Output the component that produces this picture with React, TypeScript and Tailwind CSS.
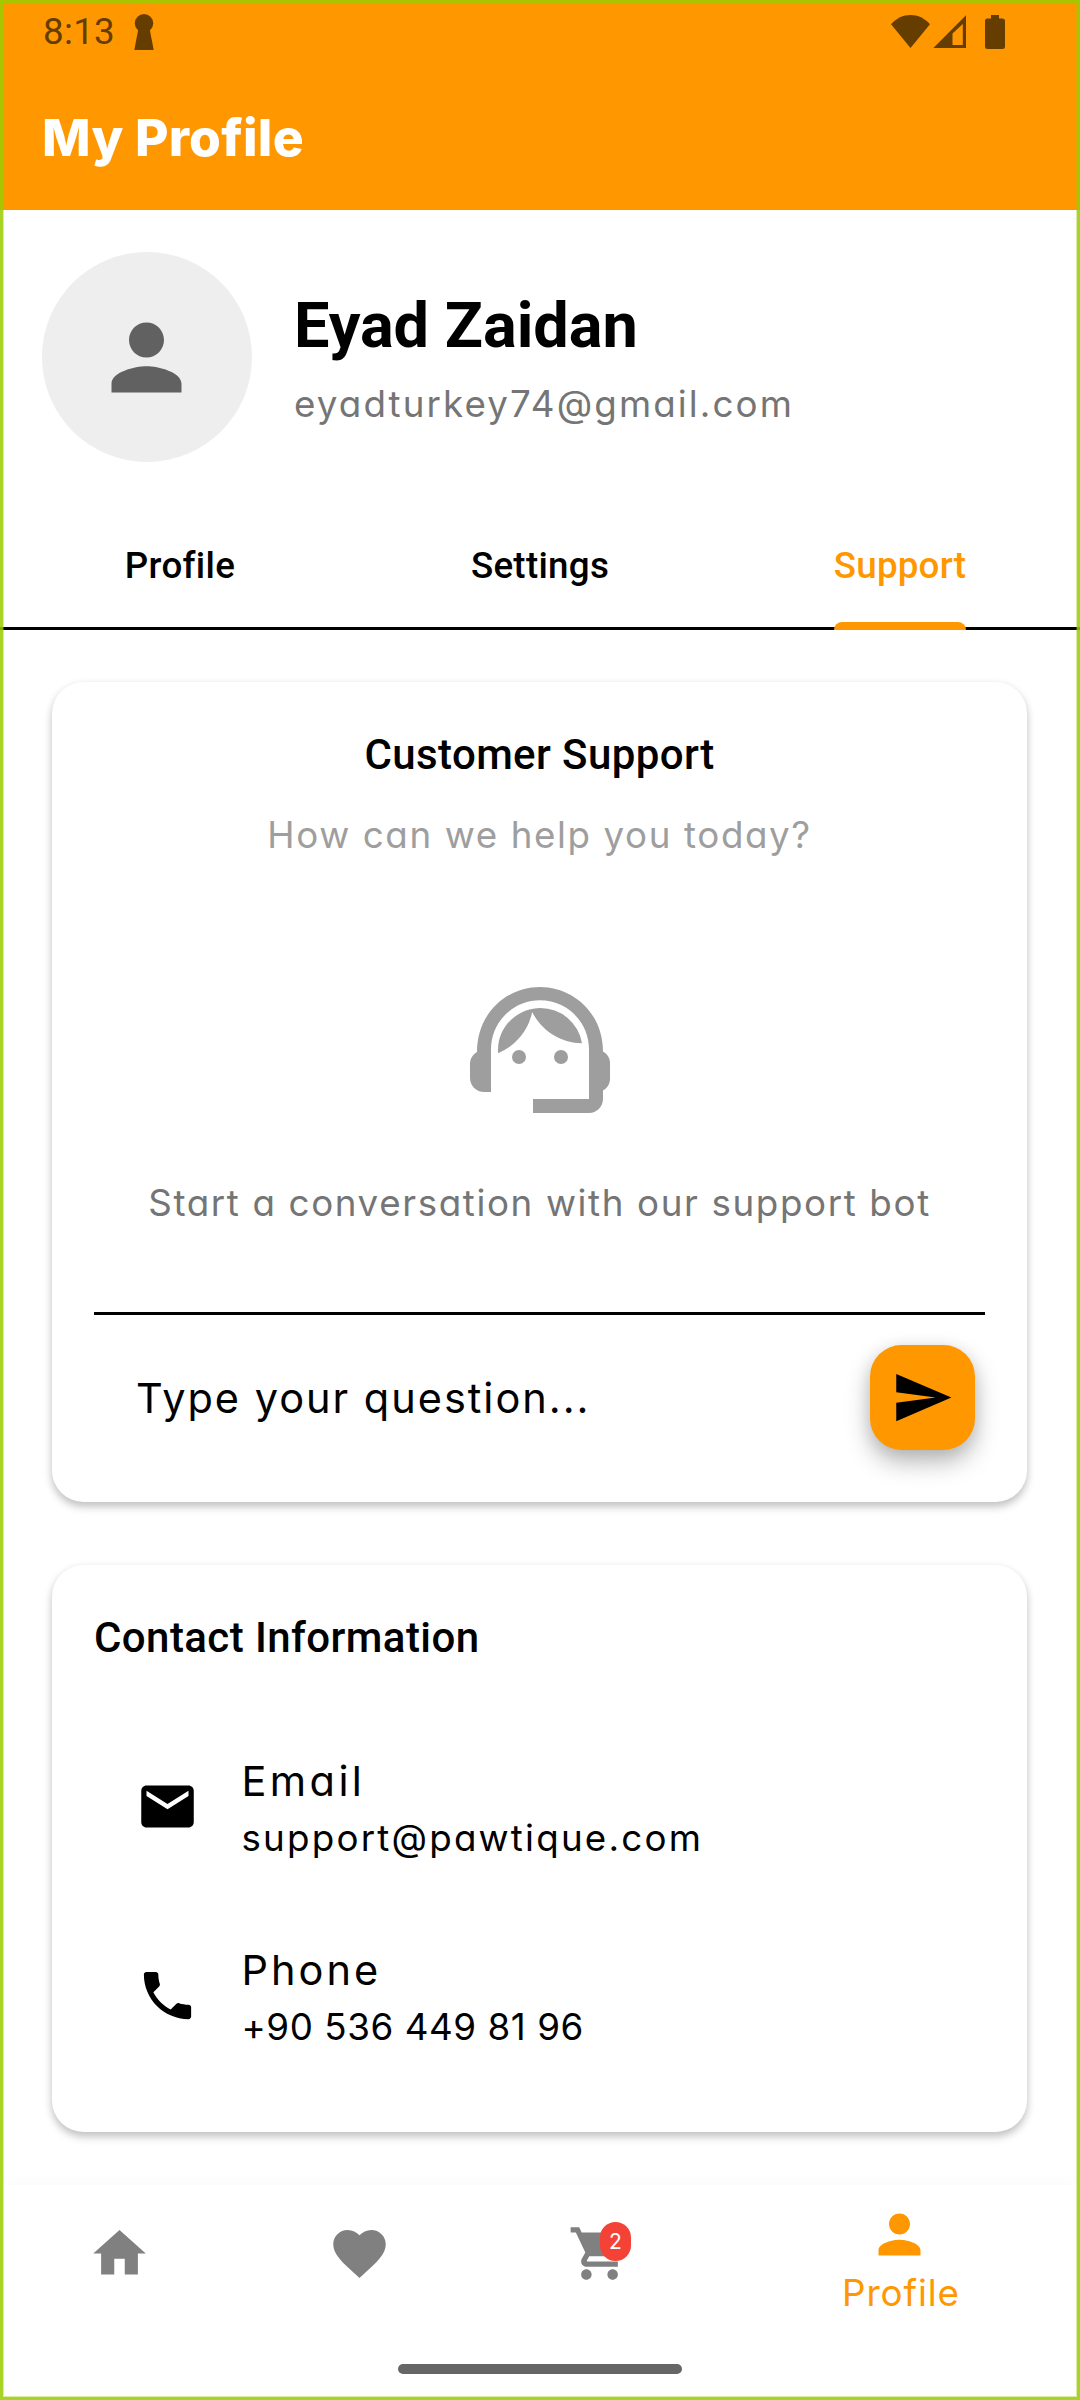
import React from "react";
import {
  MdEmail,
  MdFavorite,
  MdHome,
  MdPerson,
  MdPhone,
  MdSend,
  MdShoppingCart,
  MdSupportAgent,
} from "react-icons/md";

const body = "font-['Inter',sans-serif] [font-feature-settings:'cv11']";
const heading = "font-['Roboto',sans-serif] font-medium";
const card =
  "ml-[52px] w-[975px] rounded-[31.5px] bg-white px-[42px] shadow-[0_5px_9px_rgba(0,0,0,0.22),0_1px_8px_rgba(0,0,0,0.05)]";

function StatusBar() {
  return (
    <div className="flex h-[63px] items-center justify-between pl-[43px] pr-[75px] text-[#663d00]">
      <div className="flex items-center">
        <span className="font-['Roboto',sans-serif] text-[36.75px] leading-[62px] tracking-[0.3px]">
          8:13
        </span>
        <svg className="ml-[19px] h-[36px] w-[20px]" viewBox="0 0 20 36" fill="currentColor">
          <circle cx="10" cy="9.2" r="9.2" />
          <path d="M4.5 14h11l4.2 22H.3z" />
        </svg>
      </div>
      <svg className="h-[34px] w-[114px]" viewBox="0 0 114 34" fill="currentColor">
        <path d="M0 9.2C5.5 3.2 12 0 19.5 0S33.500 3.200 39 9.200L19.500 33z" />
        <path
          fillRule="evenodd"
          d="M42.300 33 75 .300V33zM61.500 30H71.800V9L61.500 18.500z"
        />
        <path d="M100 0h8v3.500h3.500a2.500 2.500 0 0 1 2.500 2.500v25.500a2.500 2.500 0 0 1-2.500 2.500h-15a2.500 2.500 0 0 1-2.500-2.500V6a2.500 2.500 0 0 1 2.500-2.500h3.500z" />
      </svg>
    </div>
  );
}

function Tabs() {
  return (
    <div className="grid h-[126px] grid-cols-3 border-b-[3px] border-black text-center">
      <div className={`${heading} text-[36.75px] leading-[123px] tracking-[0.3px]`}>Profile</div>
      <div className={`${heading} text-[36.75px] leading-[123px] tracking-[0.28px]`}>Settings</div>
      <div className="flex justify-center">
        <div className={`${heading} relative text-[36.75px] leading-[123px] tracking-[0.2px] text-[#ff9800]`}>
          Support
          <span className="absolute -bottom-[3px] left-0 h-[8px] w-full rounded-t-[8px] bg-[#ff9800]" />
        </div>
      </div>
    </div>
  );
}

function SupportCard() {
  return (
    <section className={`${card} mt-[52px] flex h-[820px] flex-col pt-[42px]`}>
      <h2 className={`${heading} text-center text-[42px] leading-[61px] tracking-[0.4px]`}>
        Customer Support
      </h2>
      <p className={`${body} mt-[22px] text-center text-[36.75px] leading-[55px] tracking-[1.6px] text-[#9e9e9e]`}>
        How can we help you today?
      </p>
      <MdSupportAgent className="mt-[104px] ml-[362px] size-[168px] shrink-0 text-[#9e9e9e]" />
      <p className={`${body} mt-[41px] text-center text-[36.75px] leading-[55px] tracking-[1.62px] text-[#757575]`}>
        Start a conversation with our support bot
      </p>
      <div className="mt-[82px] h-[3px] shrink-0 bg-black" />
      <div className="mt-[30px] flex items-center justify-between pl-[42px] pr-[10px]">
        <span className={`${body} text-[41.5px] leading-[62px] tracking-[1.98px]`}>
          Type your question...
        </span>
        <button className="flex size-[105px] items-center justify-center rounded-[31.5px] bg-[#ff9800] text-black shadow-[0_12px_24px_rgba(0,0,0,0.28),0_2px_16px_rgba(0,0,0,0.08)]">
          <MdSend className="size-[63px]" />
        </button>
      </div>
    </section>
  );
}

function ContactCard() {
  return (
    <section className={`${card} mt-[63px] h-[567px] pt-[42px]`}>
      <h2 className={`${heading} text-[42px] leading-[61px] tracking-[0.42px]`}>
        Contact Information
      </h2>
      <div className="mt-[84px] flex pl-[42px]">
        <MdEmail className="mt-[23px] size-[63px]" />
        <div className={`${body} ml-[42.5px]`}>
          <p className="text-[41.5px] leading-[58px] tracking-[3.4px]">Email</p>
          <p className="text-[36.75px] leading-[55px] tracking-[2.2px]">support@pawtique.com</p>
        </div>
      </div>
      <div className="mt-[76px] flex pl-[42px]">
        <MdPhone className="mt-[23px] size-[63px]" />
        <div className={`${body} ml-[42.5px]`}>
          <p className="text-[41.5px] leading-[58px] tracking-[3px]">Phone</p>
          <p className="text-[36.75px] leading-[55px] tracking-[0.55px]">+90 536 449 81 96</p>
        </div>
      </div>
    </section>
  );
}

function BottomNav() {
  return (
    <nav className="mt-[53px] flex h-[215px] flex-col bg-white shadow-[0_-4px_14px_rgba(0,0,0,0.02)]">
      <div className="flex h-[179px] items-start text-[#808080]">
        <div className="flex w-[240px] justify-center pt-[37px] pr-[1px]">
          <MdHome className="size-[63px]" />
        </div>
        <div className="flex w-[240px] justify-center pt-[37px] pr-[1px]">
          <MdFavorite className="size-[63px]" />
        </div>
        <div className="flex w-[240px] justify-center pt-[37px] pr-[1px]">
          <div className="relative">
            <MdShoppingCart className="size-[63px]" />
            <span className={`${body} absolute left-[32px] top-0 flex h-[39px] w-[31px] items-center justify-center rounded-full bg-[#f44336] text-[21px] text-white`}>
              2
            </span>
          </div>
        </div>
        <div className="flex w-[360px] flex-col items-center pt-[18px] text-[#ff9800]">
          <MdPerson className="mr-[1px] size-[63px]" />
          <span className={`${body} ml-[2px] mt-[-1px] text-[36.75px] leading-[55px] tracking-[0.9px]`}>
            Profile
          </span>
        </div>
      </div>
      <div className="mx-auto h-[10px] w-[284px] rounded-full bg-[#666]" />
    </nav>
  );
}

export default function App() {
  return (
    <div className="relative flex h-[2400px] w-[1080px] flex-col overflow-hidden bg-white text-black">
      <header className="h-[210px] bg-[#ff9800]">
        <StatusBar />
        <h1 className={`${body} pl-[42px] text-[51.5px] font-extrabold leading-[148px] tracking-[0.2px] text-white`}>
          My Profile
        </h1>
      </header>
      <section className="flex h-[294px] items-start px-[42px] pt-[42px]">
        <div className="flex size-[210px] items-center justify-center rounded-full bg-[#eee]">
          <MdPerson className="mr-[1px] size-[105px] text-[#616161]" />
        </div>
        <div className="ml-[42px] pt-[37px]">
          <p className="font-['Roboto',sans-serif] text-[63px] font-bold leading-[74px]">Eyad Zaidan</p>
          <p className={`${body} mt-[13px] text-[36.75px] leading-[55px] tracking-[2.1px] text-[#757575]`}>
            eyadturkey74@gmail.com
          </p>
        </div>
      </section>
      <Tabs />
      <SupportCard />
      <ContactCard />
      <BottomNav />
      <div className="pointer-events-none absolute inset-0 border-[3px] border-[#99cc00]/85 shadow-[inset_0_0_0_1px_rgba(153,204,0,0.35)]" />
    </div>
  );
}
